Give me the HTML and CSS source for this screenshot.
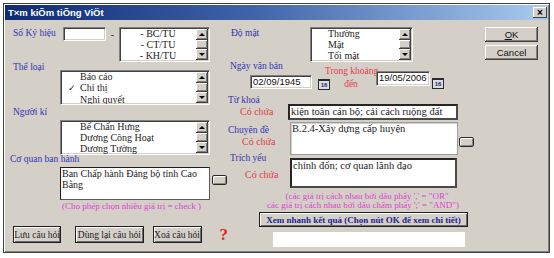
FILE: index.html
```html
<!DOCTYPE html>
<html lang="vi">
<head>
    <meta charset="UTF-8">
    <meta name="viewport" content="width=device-width, initial-scale=1.0">
    <title>Tìm kiếm tiếng Việt</title>
    <link rel="stylesheet" href="styles.css">
</head>
<body>
    <div class="dlg">
        <div class="titlebar">
            <span class="title">T×m kiÕm tiÕng ViÖt</span>
            <span class="close">×</span>
        </div>

        <div class="content">
            <!-- Cột trái -->
            <div class="col-left">
                <div class="row kyhieu-row">
                    <span class="lbl kyhieu-lbl">Số Ký hiệu</span>
                    <div class="field kyhieu-in"></div>
                    <span class="dash">-</span>
                    <div class="field list kyhieu-list">
                        <div class="items centered">
                            <div>- BC/TU</div>
                            <div>- CT/TU</div>
                            <div>- KH/TU</div>
                        </div>
                        <div class="sb"><span class="sb-btn up"></span><span class="sb-thumb"></span><span class="sb-btn down"></span></div>
                    </div>
                </div>

                <div class="lbl theloai-lbl">Thể loại</div>
                <div class="field list wide-list theloai-list">
                    <div class="items indent">
                        <div>Báo cáo</div>
                        <div><span class="tick">✓</span>Chỉ thị</div>
                        <div>Nghị quyết</div>
                    </div>
                    <div class="sb"><span class="sb-btn up"></span><span class="sb-thumb"></span><span class="sb-btn down"></span></div>
                </div>

                <div class="lbl nguoiki-lbl">Người kí</div>
                <div class="field list wide-list nguoiki-list">
                    <div class="items indent">
                        <div>Bế Chấn Hưng</div>
                        <div>Dương Công Hoạt</div>
                        <div>Dương Tường</div>
                    </div>
                    <div class="sb"><span class="sb-btn up"></span><span class="sb-thumb"></span><span class="sb-btn down"></span></div>
                </div>

                <div class="lbl coquan-lbl">Cơ quan ban hành</div>
                <div class="row coquan-row">
                    <div class="memo coquan-box">Ban Chấp hành Đảng bộ tỉnh Cao<br>Bằng</div>
                    <span class="mini coquan-btn"></span>
                </div>
                <div class="pink check-note">(Cho phép chọn nhiều giá trị = check )</div>

                <div class="row actions">
                    <button class="btn save">Lưu câu hỏi</button>
                    <button class="btn reuse">Dùng lại câu hỏi</button>
                    <button class="btn clear">Xoá câu hỏi</button>
                    <span class="help">?</span>
                </div>
            </div>

            <!-- Cột giữa -->
            <div class="col-mid">
                <div class="row domat-row">
                    <span class="lbl domat-lbl">Độ mật</span>
                    <div class="field list domat-list">
                        <div class="items domat-items">
                            <div>Thường</div>
                            <div>Mật</div>
                            <div>Tối mật</div>
                        </div>
                        <div class="sb"><span class="sb-btn up"></span><span class="sb-thumb"></span><span class="sb-btn down"></span></div>
                    </div>
                </div>

                <div class="lbl ngay-lbl">Ngày văn bản</div>
                <div class="row dates">
                    <div class="field date date1">02/09/1945</div>
                    <span class="cal cal1">16</span>
                    <div class="range">
                        <div class="red">Trong khoảng</div>
                        <div class="red range-to">đến</div>
                    </div>
                    <div class="field date date2">19/05/2006</div>
                    <span class="cal cal2">16</span>
                </div>

                <div class="row tukhoa">
                    <div class="side">
                        <div class="lbl">Từ khoá</div>
                        <div class="red cochua tukhoa-cc">Có chứa</div>
                    </div>
                    <div class="memo dark tukhoa-box">kiện toàn cán bộ; cải cách ruộng đất</div>
                </div>

                <div class="row chuyende">
                    <div class="side side-wide">
                        <div class="lbl chuyende-lbl">Chuyên đề</div>
                        <div class="red cochua chuyende-cc">Có chứa</div>
                    </div>
                    <div class="memo light chuyende-box">B.2.4-Xây dựng cấp huyện</div>
                    <span class="mini chuyende-btn"></span>
                </div>

                <div class="row trichyeu">
                    <div class="side side-wide">
                        <div class="lbl trichyeu-lbl">Trích yếu</div>
                        <div class="red cochua trichyeu-cc">Có chứa</div>
                    </div>
                    <div class="memo dark trichyeu-box">chỉnh đốn; cơ quan lãnh đạo</div>
                </div>

                <div class="pink notes">
                    <div class="note-or">(các giá trị cách nhau bởi dấu phẩy ',' = "OR"</div>
                    <div>các giá trị cách nhau bởi dấu chấm phẩy ';' = "AND")</div>
                </div>
                <button class="btn quick">Xem nhanh kết quả (Chọn nút OK để xem chi tiết)</button>
                <div class="result"></div>
            </div>

            <!-- Cột phải -->
            <div class="col-right">
                <button class="win-btn ok"><u>O</u>K</button>
                <button class="win-btn cancel">Cancel</button>
            </div>
        </div>
    </div>
</body>
</html>
```

FILE: styles.css
```css
* {
    box-sizing: border-box;
}
body {
    margin: 0;
    background: #fff;
    font-family: "Liberation Serif", serif;
    font-size: 10px;
    color: #1c1c1c;
}
.dlg {
    margin: 3px 0 0 3px;
    width: 547px;
    height: 250px;
    border: 1px solid #404040;
    background: #d4d0c8;
    box-shadow: inset 1px 1px 0 #fff, inset -1px -1px 0 #808080;
}
.titlebar {
    margin: 1px 1px 0 1px;
    height: 15px;
    padding: 0 1px 0 3px;
    display: flex;
    align-items: center;
    justify-content: space-between;
    background: linear-gradient(to right, #0e2a74, #3f62a8 45%, #a9cbee);
}
.title {
    color: #fff;
    font: bold 9.5px "Liberation Sans", sans-serif;
}
.close {
    width: 14px;
    height: 11px;
    background: #d4d0c8;
    box-shadow: inset -1px -1px 0 #404040, inset 1px 1px 0 #fff;
    font: bold 10px/11px "Liberation Sans", sans-serif;
    text-align: center;
    color: #000;
}
.content {
    display: flex;
    padding-left: 6px;
}
.row {
    display: flex;
    align-items: flex-start;
}
.lbl {
    color: #3034b4;
    font-size: 9.5px;
    line-height: 10px;
    white-space: nowrap;
}
.red {
    color: #e33d4c;
    font-size: 9.5px;
    line-height: 10px;
    white-space: nowrap;
}
.pink {
    color: #e03ed6;
    font-size: 9px;
    line-height: 9px;
    white-space: nowrap;
}

/* champs creusés */
.field {
    background: #fff;
    border: 1px solid;
    border-color: #808080 #fff #fff #808080;
    box-shadow: inset 1px 1px 0 #404040, inset -1px -1px 0 #d4d0c8;
}
.list {
    display: flex;
}
.items {
    flex: 1;
    line-height: 11px;
    white-space: nowrap;
    overflow: hidden;
}
.centered {
    text-align: center;
}
.indent {
    padding-left: 19px;
}
.tick {
    display: inline-block;
    width: 12px;
    margin-left: -12px;
    font-size: 9px;
}
.sb {
    width: 12px;
    margin: 1px 1px 1px 0;
    display: flex;
    flex-direction: column;
}
.sb-btn, .sb-thumb {
    background: #d4d0c8;
    box-shadow: inset -1px -1px 0 #404040, inset 1px 1px 0 #fff, inset -2px -2px 0 #808080;
}
.sb-btn {
    height: 11px;
    display: flex;
    align-items: center;
    justify-content: center;
}
.sb-btn::after {
    content: "";
    border-left: 3px solid transparent;
    border-right: 3px solid transparent;
}
.up::after {
    border-bottom: 3px solid #000;
}
.down::after {
    border-top: 3px solid #000;
}
.sb-thumb {
    flex: 1;
}

/* colonne gauche */
.col-left {
    width: 218px;
}
.kyhieu-row {
    margin-top: 7px;
    height: 35px;
}
.kyhieu-lbl {
    margin: 1px 0 0 3px;
    width: 50px;
    line-height: 11px;
}
.kyhieu-in {
    width: 43px;
    height: 14px;
}
.dash {
    width: 13px;
    margin-top: 2px;
    text-align: center;
    line-height: 11px;
}
.kyhieu-list {
    width: 91px;
    height: 35px;
}
.wide-list {
    margin-left: 50px;
    width: 150px;
    height: 35px;
}
.theloai-lbl {
    margin-left: 3px;
}
.theloai-list {
    margin-top: -2px;
}
.nguoiki-lbl {
    margin: 2px 0 0 3px;
}
.nguoiki-list {
    margin-top: 3px;
}
.coquan-lbl {
    margin-top: -1px;
}
.coquan-row {
    margin-top: 3px;
}
.memo {
    background: #fff;
    font-size: 10.5px;
    line-height: 11px;
    padding-left: 1px;
    white-space: nowrap;
    overflow: hidden;
}
.coquan-box {
    margin-left: 50px;
    width: 150px;
    height: 33px;
    font-size: 10px;
    border: 1px solid;
    border-color: #1e1e1e #5a5a5a #5a5a5a #1e1e1e;
}
.mini {
    width: 15px;
    height: 10px;
    background: #d4d0c8;
    border: 1px solid #2a2a2a;
    border-radius: 2px;
    box-shadow: inset 1px 1px 0 #fff, inset -1px -1px 0 #8a8a8a;
}
.coquan-btn {
    margin: 8px 0 0 2px;
}
.check-note {
    margin: 1px 0 0 52px;
    line-height: 10px;
}
.actions {
    margin-top: 15px;
}
.btn {
    padding: 0;
    height: 17px;
    background: #d4d0c8;
    border: 1px solid #1e1e1e;
    box-shadow: inset 1px 1px 0 #fff, inset -1px -1px 0 #6e6e6e;
    font: 9.5px "Liberation Serif", serif;
    color: #222;
    white-space: nowrap;
}
.save {
    margin-left: 3px;
    width: 54px;
}
.reuse {
    margin-left: 14px;
    width: 77px;
}
.clear {
    margin-left: 9px;
    width: 55px;
}
.help {
    margin-left: 18px;
    color: #e02424;
    font: bold 17px/17px "Liberation Serif", serif;
}

/* colonne centrale */
.col-mid {
    width: 250px;
}
.domat-row {
    margin-top: 7px;
    height: 35px;
}
.domat-lbl {
    margin: 1px 0 0 3px;
    width: 79px;
    line-height: 11px;
}
.domat-list {
    width: 103px;
    height: 35px;
}
.domat-items {
    padding-left: 17px;
}
.ngay-lbl {
    margin: -1px 0 0 2px;
}
.dates {
    height: 20px;
}
.date {
    font: 9.5px/12px "Liberation Sans", sans-serif;
    padding-left: 2px;
    color: #111;
}
.date1 {
    margin: 4px 0 0 22px;
    width: 62px;
    height: 14px;
}
.date2 {
    margin-left: -1px;
    width: 54px;
    height: 15px;
}
.cal {
    width: 12px;
    height: 11px;
    border: 1px solid #2b2b2b;
    border-top-width: 2px;
    background: #dcdce8;
    font: bold 6px/8px "Liberation Sans", sans-serif;
    color: #1b2466;
    text-align: center;
}
.cal1 {
    margin: 8px 0 0 6px;
}
.cal2 {
    margin: 7px 0 0 2px;
}
.range {
    margin: -5px 0 0 -5px;
    width: 52px;
    text-align: center;
}
.range-to {
    margin-top: 3px;
}
.tukhoa {
    margin-top: 4px;
}
.side {
    width: 60px;
}
.side-wide {
    width: 62px;
}
.cochua {
    margin-top: 2px;
    font-size: 10px;
}
.tukhoa-cc {
    margin-left: 12px;
}
.dark {
    border: 2px solid;
    border-color: #262626 #4a4a4a #4a4a4a #262626;
}
.light {
    border: 1px solid #9c9c9c;
    box-shadow: inset 1px 1px 0 #d0d0d0;
}
.tukhoa-box {
    margin-top: 9px;
    width: 170px;
    height: 16px;
}
.chuyende {
    margin-top: 2px;
}
.chuyende-lbl {
    margin-top: 3px;
}
.chuyende-cc {
    margin-left: 14px;
}
.chuyende-box {
    width: 168px;
    height: 33px;
}
.chuyende-btn {
    margin: 15px 0 0 1px;
}
.trichyeu {
    margin-top: -2px;
}
.trichyeu-lbl {
    margin-left: 2px;
}
.trichyeu-cc {
    margin: 7px 0 0 17px;
}
.trichyeu-box {
    margin-top: 5px;
    width: 167px;
    height: 30px;
}
.notes {
    margin: 4px 0 0 30px;
    width: 210px;
    text-align: center;
}
.note-or {
    padding-left: 8px;
}
.quick {
    display: block;
    margin: 2px 0 0 31px;
    width: 209px;
    height: 15px;
    font-size: 9px;
    font-weight: bold;
    color: #1d2490;
}
.result {
    margin: 5px 0 0 45px;
    width: 192px;
    height: 15px;
    background: #fff;
}

/* colonne droite */
.col-right {
    margin-left: 7px;
    display: flex;
    flex-direction: column;
}
.win-btn {
    padding: 0;
    width: 53px;
    height: 15px;
    background: #d4d0c8;
    border: none;
    box-shadow: inset -1px -1px 0 #404040, inset 1px 1px 0 #fff, inset -2px -2px 0 #808080;
    font: 9.5px "Liberation Sans", sans-serif;
    color: #111;
}
.ok {
    margin-top: 7px;
}
.cancel {
    margin-top: 3px;
}
```
